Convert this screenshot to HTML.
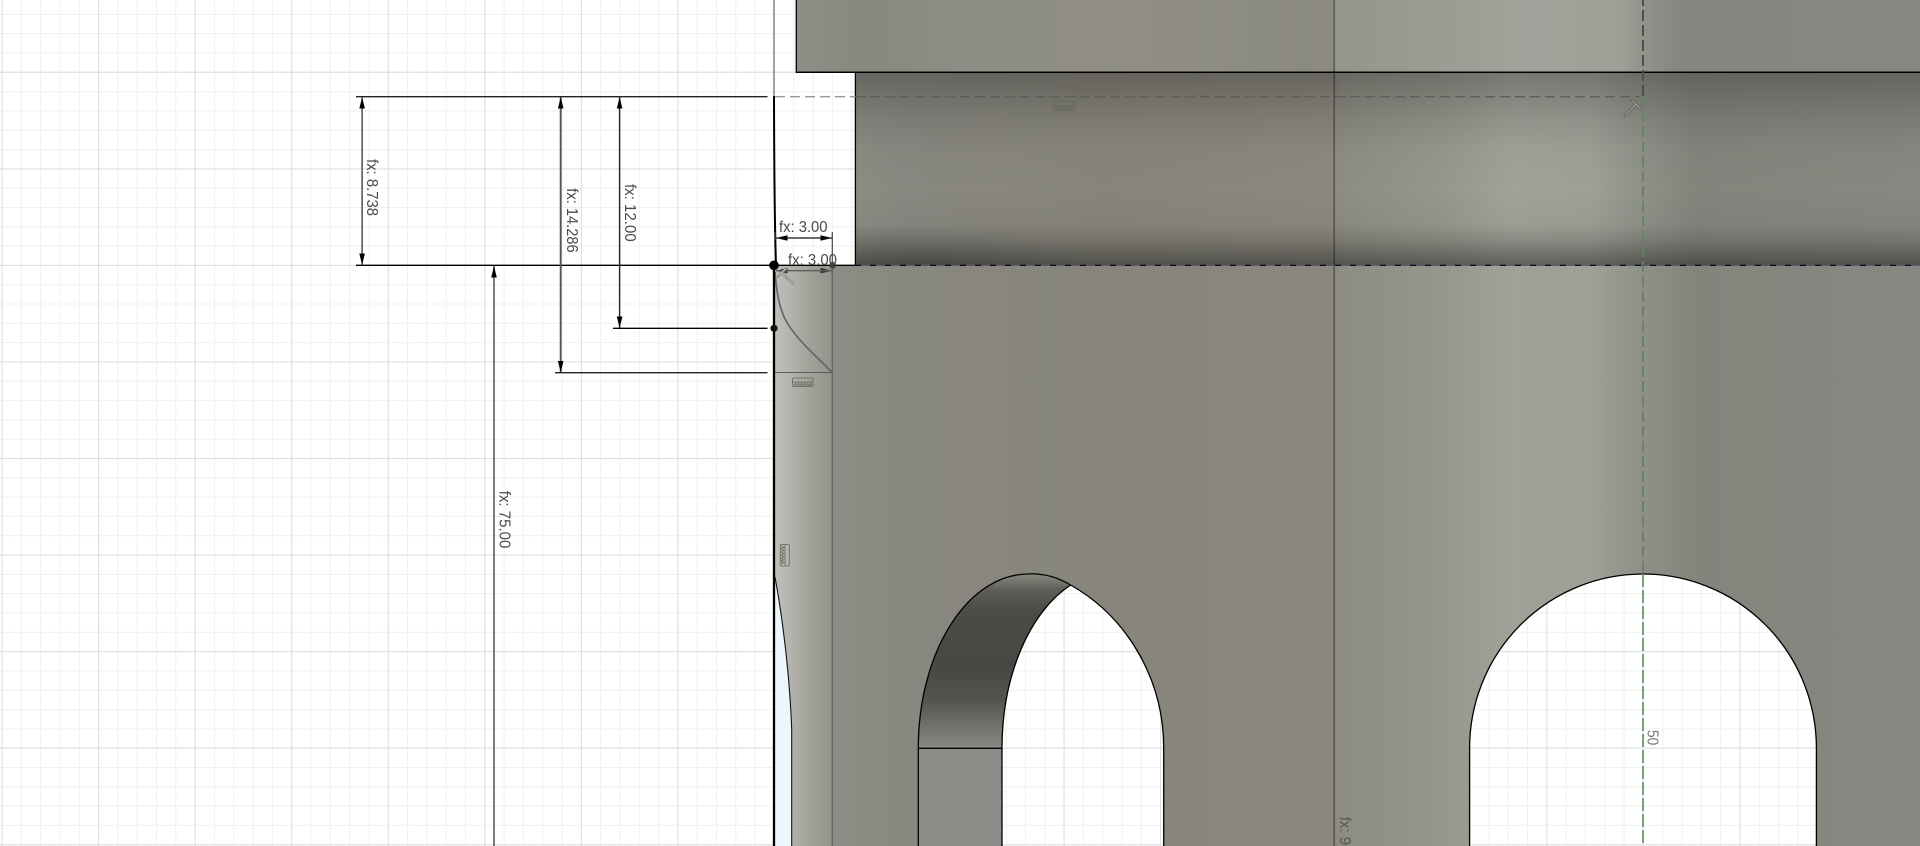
<!DOCTYPE html>
<html>
<head>
<meta charset="utf-8">
<title>CAD sketch</title>
<style>
html,body{margin:0;padding:0;width:1920px;height:846px;overflow:hidden;background:#fff}
#wrap{position:relative;width:1920px;height:846px;overflow:hidden}
svg{position:absolute;left:-5px;top:-5px;display:block;filter:blur(.35px)}
text{font-family:"Liberation Sans",Arial,sans-serif;font-size:16px;fill:#4a4a4a}
</style>
</head>
<body>
<div id="wrap">
<svg width="1930" height="856" viewBox="-5 -5 1930 856" xmlns="http://www.w3.org/2000/svg">
<defs>
<linearGradient id="base" gradientUnits="userSpaceOnUse" x1="832" y1="0" x2="1920" y2="0">
<stop offset="0" stop-color="#8d8d85"/>
<stop offset="0.07" stop-color="#888780"/>
<stop offset="0.25" stop-color="#87857b"/>
<stop offset="0.42" stop-color="#8a887e"/>
<stop offset="0.46" stop-color="#8b897f"/>
<stop offset="0.47" stop-color="#8e8d84"/>
<stop offset="0.56" stop-color="#96968d"/>
<stop offset="0.623" stop-color="#a1a199"/>
<stop offset="0.697" stop-color="#9f9f97"/>
<stop offset="0.745" stop-color="#8f9088"/>
<stop offset="0.793" stop-color="#83857d"/>
<stop offset="1" stop-color="#868981"/>
</linearGradient>
<linearGradient id="topb" gradientUnits="userSpaceOnUse" x1="796" y1="0" x2="1920" y2="0">
<stop offset="0" stop-color="#8f8f88"/>
<stop offset="0.057" stop-color="#88887f"/>
<stop offset="0.146" stop-color="#8d8d85"/>
<stop offset="0.297" stop-color="#918f85"/>
<stop offset="0.448" stop-color="#8b8a81"/>
<stop offset="0.4786" stop-color="#8c8b82"/>
<stop offset="0.4804" stop-color="#95958c"/>
<stop offset="0.582" stop-color="#9c9c94"/>
<stop offset="0.653" stop-color="#a3a39c"/>
<stop offset="0.733" stop-color="#9f9f97"/>
<stop offset="0.7535" stop-color="#92938b"/>
<stop offset="0.786" stop-color="#848780"/>
<stop offset="1" stop-color="#858880"/>
</linearGradient>
<linearGradient id="shade" gradientUnits="userSpaceOnUse" x1="0" y1="72" x2="0" y2="265">
<stop offset="0" stop-color="#000" stop-opacity=".26"/>
<stop offset="0.13" stop-color="#000" stop-opacity=".17"/>
<stop offset="0.25" stop-color="#000" stop-opacity=".09"/>
<stop offset="0.40" stop-color="#000" stop-opacity=".02"/>
<stop offset="0.61" stop-color="#000" stop-opacity="0"/>
<stop offset="0.79" stop-color="#000" stop-opacity=".03"/>
<stop offset="0.87" stop-color="#000" stop-opacity=".14"/>
<stop offset="0.95" stop-color="#000" stop-opacity=".3"/>
<stop offset="1" stop-color="#000" stop-opacity=".4"/>
</linearGradient>
<radialGradient id="corner" gradientUnits="userSpaceOnUse" cx="0" cy="0" r="1" gradientTransform="translate(915 268) scale(170 45)">
<stop offset="0" stop-color="#000" stop-opacity=".13"/>
<stop offset="1" stop-color="#000" stop-opacity="0"/>
</radialGradient>
<linearGradient id="strip" gradientUnits="userSpaceOnUse" x1="774" y1="0" x2="832" y2="0">
<stop offset="0" stop-color="#c0c1bb"/>
<stop offset="0.3" stop-color="#b2b3ac"/>
<stop offset="0.65" stop-color="#a0a098"/>
<stop offset="1" stop-color="#93938b"/>
</linearGradient>
<linearGradient id="dark" gradientUnits="userSpaceOnUse" x1="0" y1="574" x2="0" y2="748">
<stop offset="0" stop-color="#8a8a82"/>
<stop offset="0.09" stop-color="#5f5e58"/>
<stop offset="0.21" stop-color="#4c4b46"/>
<stop offset="0.55" stop-color="#494843"/>
<stop offset="0.73" stop-color="#55544e"/>
<stop offset="0.87" stop-color="#70716b"/>
<stop offset="1" stop-color="#888a85"/>
</linearGradient>
</defs>

<!-- grid -->
<line x1="1.55" y1="423" x2="1930" y2="423" stroke="#f0f0f0" stroke-width="860" stroke-dasharray="1 18.31"/>
<line x1="960" y1="13.87" x2="960" y2="856" stroke="#f0f0f0" stroke-width="1940" stroke-dasharray="1 18.31"/>
<line x1="1.55" y1="423" x2="1930" y2="423" stroke="#dddddd" stroke-width="860" stroke-dasharray="1 95.55"/>
<line x1="960" y1="71.8" x2="960" y2="856" stroke="#dddddd" stroke-width="1940" stroke-dasharray="1 95.55"/>

<!-- top block -->
<rect x="796" y="-5" width="1134" height="77.3" fill="url(#topb)"/>
<path d="M796.3 -5V72.3H1930" fill="none" stroke="#000" stroke-width="1.3"/>

<!-- middle band -->
<rect x="855.4" y="72.3" width="1075" height="193" fill="url(#base)"/>
<rect x="855.4" y="72.3" width="1075" height="193" fill="url(#shade)"/>
<rect x="855.4" y="220" width="300" height="45.3" fill="url(#corner)"/>
<path d="M855.4 72.3V265" fill="none" stroke="#000" stroke-width="1.3"/>
<path d="M796.3 72.3H1930" fill="none" stroke="#000" stroke-width="1.3"/>

<!-- lower body -->
<path d="M832 265H1930V856H1816.4V748A173.4 174 0 0 0 1469.6 748V856H1163.7V748A180 186 0 0 0 1070.7 585A110 174 0 0 0 1028.3 574A110 174 0 0 0 918.3 748V856H832Z" fill="url(#base)"/>
<!-- strip -->
<path d="M775 577C783 620 790 680 791.7 730V856H775Z" fill="#eef6fd"/>
<path d="M774 265H832V856H791.7V730C790 680 783 620 775 577H774Z" fill="url(#strip)"/>
<path d="M775 577C783 620 790 680 791.7 730V856" fill="none" stroke="#111" stroke-width="1.1"/>
<!-- dark arch face -->
<path d="M918.3 748A110 174 0 0 1 1028.3 574A110 174 0 0 1 1070.7 585A110 176 0 0 0 1002 748Z" fill="url(#dark)"/>
<rect x="918.3" y="748" width="83.7" height="108" fill="#8b8d88"/>
<path d="M918.3 856V748A110 174 0 0 1 1028.3 574A110 174 0 0 1 1070.7 585A180 186 0 0 1 1163.7 748V856M1070.7 585A110 176 0 0 0 1002 748V856M918.3 748.3H1002M1469.6 856V748A173.4 174 0 0 1 1816.4 748V856" fill="none" stroke="#000" stroke-width="1.3"/>

<!-- strip lines -->
<path d="M832.3 265V856" stroke="#646a64" stroke-width="1.4" fill="none"/>
<path d="M775 272C777 300 782 318 792 330C803 345 818 358 832 372.3" stroke="#666" stroke-width="1.7" fill="none"/>
<path d="M774 372.5H832" stroke="#5c5c58" stroke-width="1.1" fill="none"/>

<!-- vertical reference lines -->
<path d="M1334.2 -5V856" stroke="#000" stroke-opacity=".38" stroke-width="1.5" fill="none"/>
<path d="M1643 -5V96" stroke="#46544a" stroke-width="2" stroke-dasharray="11 4" fill="none"/>
<path d="M1643 96V574" stroke="#5f8661" stroke-width="1.8" stroke-dasharray="11 4" fill="none"/>
<path d="M1643 574V856" stroke="#6a9a6c" stroke-width="1.8" stroke-dasharray="13 3" fill="none"/>

<!-- axis -->
<path d="M774 -5V96" stroke="#777" stroke-width="1.3" fill="none"/>
<path d="M774 96C774.2 180 774.8 230 776 265" stroke="#000" stroke-width="2" fill="none"/>
<path d="M774 265V856" stroke="#000" stroke-width="2.3" fill="none"/>

<!-- dims horizontal -->
<path d="M356 96.7H767.5" stroke="#222" stroke-width="1.4" fill="none"/>
<path d="M356 265.3H855" stroke="#000" stroke-width="1.4" fill="none"/>
<path d="M613 328.3H767.5" stroke="#000" stroke-width="1.4" fill="none"/>
<path d="M555 372.7H767.5" stroke="#222" stroke-width="1.4" fill="none"/>
<path d="M855 265.3H1930" stroke="#555570" stroke-width="1.2" fill="none"/>
<path d="M855 265.3H1930" stroke="#000" stroke-width="1.2" stroke-dasharray="6 9" fill="none"/>
<path d="M775 96.7H855" stroke="#999" stroke-width="1.4" stroke-dasharray="10 5" fill="none"/>
<path d="M855 96.7H1640" stroke="#5f5f59" stroke-width="1.4" stroke-dasharray="10 5" fill="none"/>

<!-- dim verticals -->
<path d="M362.1 97V265" stroke="#333" stroke-width="1.3" fill="none"/>
<path d="M494 266V856" stroke="#666" stroke-width="1.7" fill="none"/>
<path d="M560.7 97V372" stroke="#555" stroke-width="1.9" fill="none"/>
<path d="M619.6 97V328" stroke="#222" stroke-width="1.4" fill="none"/>
<!-- arrows -->
<g fill="#000">
<path d="M362.1 97l-2.8 11.5h5.6zM362.1 265l-2.8-11.5h5.6z"/>
<path d="M494 266l-2.8 11.5h5.6z"/>
<path d="M560.7 97l-2.8 11.5h5.6zM560.7 372.5l-2.8-11.5h5.6z"/>
<path d="M619.6 97l-2.8 11.5h5.6zM619.6 328l-2.8-11.5h5.6z"/>
<path d="M776 238l11.5-2.8v5.6zM832 238l-11.5-2.8v5.6z"/>
</g>
<path d="M776 238H832" stroke="#111" stroke-width="1.3" fill="none"/>
<path d="M832.3 232V265M775 232V240" stroke="#444" stroke-width="1.2" fill="none"/>
<g fill="#333">
<path d="M776 270.7l11.5-2.8v5.6zM832 270.7l-11.5-2.8v5.6z"/>
</g>
<path d="M776 270.7H832" stroke="#5c5c5c" stroke-width="1.4" fill="none"/>

<!-- points -->
<circle cx="774" cy="265.3" r="4.8" fill="#000"/>
<circle cx="832.6" cy="265.3" r="3.4" fill="#3c3c3c" opacity=".85"/>
<circle cx="774" cy="328.3" r="3.6" fill="#111"/>

<!-- icons -->
<g fill="none" stroke="#66665f" stroke-width="1" opacity=".8">
<rect x="792.5" y="378" width="20.5" height="8.5" rx="1"/>
<path d="M793 382H813M794 386l1.5-3 1.5 3 1.5-3 1.5 3 1.5-3 1.5 3 1.5-3 1.5 3 1.5-3 1.5 3 1.5-3 1.5 3"/>
<rect x="1053.5" y="101.5" width="21" height="9" rx="1"/>
<path d="M1054 105.5H1074M1055 110l1.5-3 1.5 3 1.5-3 1.5 3 1.5-3 1.5 3 1.5-3 1.5 3 1.5-3 1.5 3 1.5-3 1.5 3"/>
<rect x="780.3" y="544.5" width="9" height="21.5" rx="1"/>
<path d="M785 545V566M781 546l3 1.5-3 1.5 3 1.5-3 1.5 3 1.5-3 1.5 3 1.5-3 1.5 3 1.5-3 1.5 3 1.5-3 1.5"/>
</g>
<path d="M1625 115.5L1636 104.5M1632.5 100.5L1640.5 108.5" stroke="#5f5f59" stroke-width="2.8" fill="none" stroke-linecap="round"/>
<path d="M1625 115.5L1636 104.5M1632.5 100.5L1640.5 108.5" stroke="#a5a59e" stroke-width="1.1" fill="none" stroke-linecap="round"/>
<path d="M793 283.5L781 272.5M778 276.5L786 268.5" stroke="#7a7a73" stroke-width="2.4" fill="none" stroke-linecap="round"/>
<path d="M793 283.5L781 272.5M778 276.5L786 268.5" stroke="#c0c1bb" stroke-width="1" fill="none" stroke-linecap="round"/>

<!-- labels -->
<text x="779" y="232" textLength="48.5" lengthAdjust="spacingAndGlyphs">fx: 3.00</text>
<text x="788" y="265" textLength="49" lengthAdjust="spacingAndGlyphs">fx: 3.00</text>
<text transform="translate(367 159) rotate(90)" textLength="57" lengthAdjust="spacingAndGlyphs">fx: 8.738</text>
<text transform="translate(566.8 188.3) rotate(90)" textLength="64.4" lengthAdjust="spacingAndGlyphs">fx: 14.286</text>
<text transform="translate(625 184) rotate(90)" textLength="57.7" lengthAdjust="spacingAndGlyphs">fx: 12.00</text>
<text transform="translate(499.5 490.7) rotate(90)" textLength="57.7" lengthAdjust="spacingAndGlyphs">fx: 75.00</text>
<text transform="translate(1647.5 730) rotate(90)" textLength="15.3" lengthAdjust="spacingAndGlyphs" style="fill:#777">50</text>
<text transform="translate(1340 816.7) rotate(90)" textLength="57.7" lengthAdjust="spacingAndGlyphs" style="fill:#555">fx: 90.00</text>
</svg>
</div>
</body>
</html>
